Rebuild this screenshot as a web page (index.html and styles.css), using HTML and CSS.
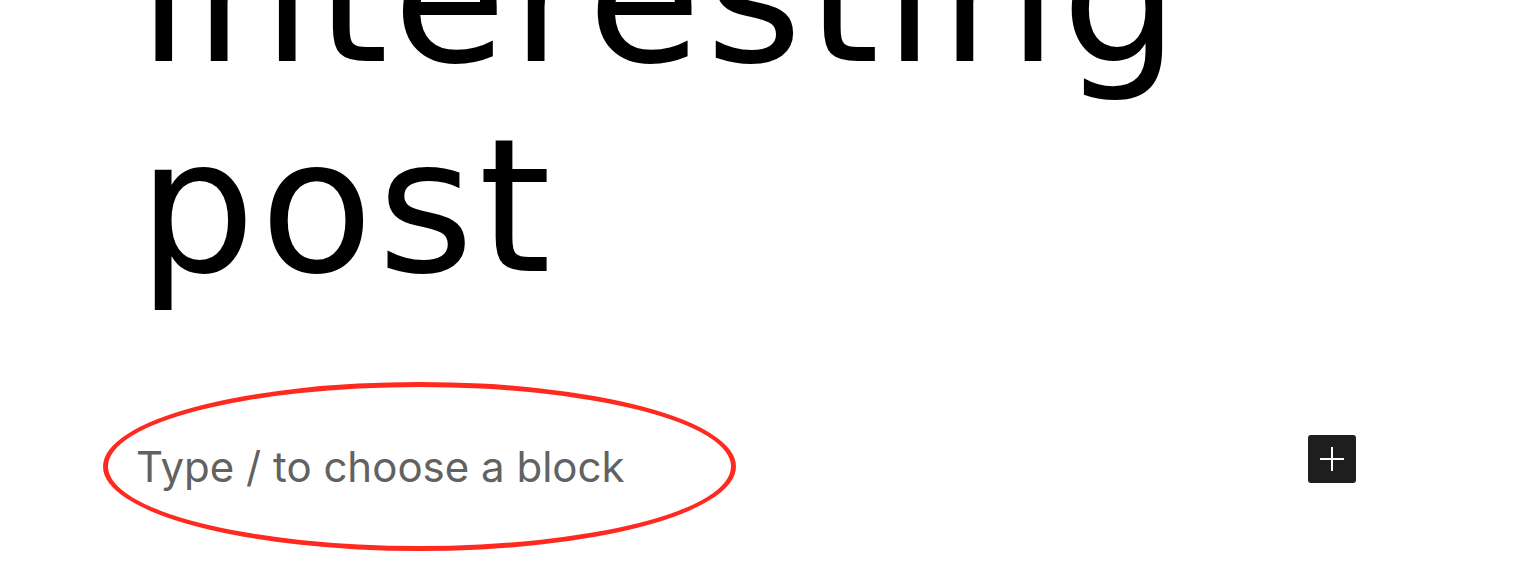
FILE: index.html
```html
<!DOCTYPE html>
<html lang="en">
<head>
<meta charset="utf-8">
<title>Editor</title>
<link rel="stylesheet" href="styles.css">
</head>
<body>
<main class="editor">
  <h1 class="post-title">interesting post</h1>
  <div class="block-row">
    <div class="placeholder-wrap">
      <p class="placeholder">Type / to choose a block</p>
      <span class="annotation" aria-hidden="true"></span>
    </div>
    <button class="inserter" type="button" aria-label="Add block">
      <svg width="24" height="24" viewBox="0 0 24 24"><path d="M11 0h2v11h11v2H13v11h-2V13H0v-2h11z" fill="#fff"/></svg>
    </button>
  </div>
</main>
</body>
</html>
```
FILE: styles.css
```css
html {
  overflow: hidden;
  height: 100%;
}

html, body {
  margin: 0;
  padding: 0;
  background: #fff;
}

body {
  min-height: 100vh;
  box-sizing: border-box;
}

.editor {
  padding: 0 174px 0 136px;
}

.post-title {
  margin: -108px 0 0 0;
  padding-left: 2px;
  width: 1150px;
  font-family: "DejaVu Sans", sans-serif;
  font-weight: 400;
  font-size: 185px;
  line-height: 210px;
  letter-spacing: 4.5px;
  color: #000;
}

.block-row {
  display: flex;
  align-items: flex-start;
  justify-content: space-between;
  margin-top: 125px;
}

.placeholder-wrap {
  position: relative;
}

.placeholder {
  margin: 0;
  font-family: Inter, sans-serif;
  font-size: 42px;
  line-height: 60px;
  color: #626262;
}

.annotation {
  position: absolute;
  left: -33px;
  top: -55px;
  width: 633px;
  height: 169px;
  box-sizing: border-box;
  border: 5px solid #ff2a1f;
  border-radius: 50%;
}

.inserter {
  margin-top: -2px;
  width: 48px;
  height: 48px;
  padding: 0;
  border: none;
  border-radius: 3px;
  background: #1e1e1e;
  display: flex;
  align-items: center;
  justify-content: center;
}
```
